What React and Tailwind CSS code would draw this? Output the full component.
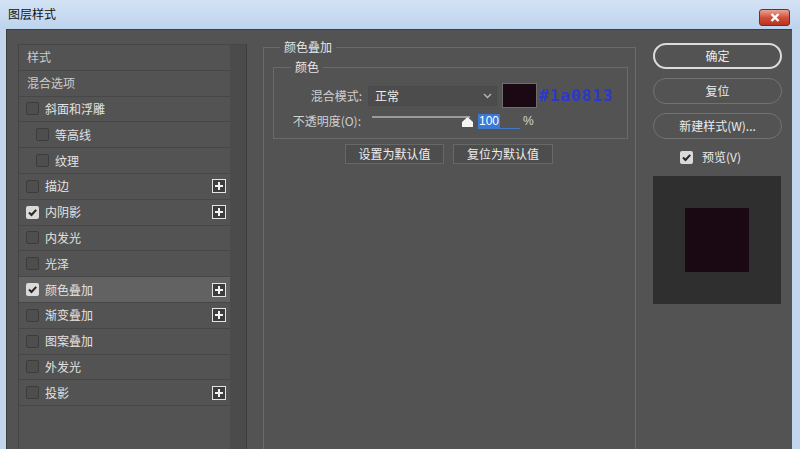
import React from "react";

const rows = [
  { label: "样式", head: true },
  { label: "混合选项", head: true },
  { label: "斜面和浮雕" },
  { label: "等高线", indent: true },
  { label: "纹理", indent: true },
  { label: "描边", plus: true },
  { label: "内阴影", checked: true, plus: true },
  { label: "内发光" },
  { label: "光泽" },
  { label: "颜色叠加", checked: true, plus: true, active: true },
  { label: "渐变叠加", plus: true },
  { label: "图案叠加" },
  { label: "外发光" },
  { label: "投影", plus: true },
];

const Check = ({ checked }) =>
  checked ? (
    <span className="flex h-[13px] w-[13px] shrink-0 items-center justify-center rounded-[2px] bg-[#dadada]">
      <svg width="11" height="11" viewBox="0 0 11 11">
        <path d="M2 5.5l2.5 2.5L9.2 2.8" fill="none" stroke="#262626" strokeWidth="2" />
      </svg>
    </span>
  ) : (
    <span className="h-[13px] w-[13px] shrink-0 rounded-[2px] border border-[#3c3c3c] bg-[#4e4e4e]" />
  );

const PlusBox = () => (
  <span className="ml-auto flex h-[14px] w-[14px] items-center justify-center border border-[#e4e4e4] bg-[#3d3d3d]">
    <svg width="10" height="10" viewBox="0 0 10 10">
      <path d="M5 1v8M1 5h8" stroke="#f2f2f2" strokeWidth="2" />
    </svg>
  </span>
);

const StyleRow = ({ row }) => {
  const base = "flex h-[25.8px] items-center border-b border-[#474747] pr-[4px] text-[12px] leading-[16px]";
  if (row.head) {
    return <div className={`${base} pl-[8px] text-[#cdcdcd]`}>{row.label}</div>;
  }
  return (
    <div className={`${base} ${row.indent ? "pl-[17px]" : "pl-[7px]"} ${row.active ? "bg-[#626262]" : ""} text-[#e2e2e2]`}>
      <Check checked={row.checked} />
      <span className="ml-[6px]">{row.label}</span>
      {row.plus && <PlusBox />}
    </div>
  );
};

const Pill = ({ children, primary }) => (
  <div
    className={`flex h-[26px] items-center justify-center rounded-full text-[12px] leading-[16px] text-[#ececec] ${
      primary ? "border-2 border-[#dcdcdc]" : "border-[1.5px] border-[#727272]"
    }`}
  >
    {children}
  </div>
);

const App = () => {
  return (
    <div className="flex h-[449px] w-[800px] flex-col overflow-hidden bg-[#c2d6ee] font-['Noto_Sans_CJK_SC',sans-serif]">
      {/* title bar */}
      <div className="flex h-[29px] shrink-0 items-start bg-gradient-to-b from-[#d4e3f5] to-[#bdd3ed] pl-[8px] pr-[10px]">
        <span className="mt-[6px] text-[12px] leading-[16px] text-[#111]">图层样式</span>
        <div className="ml-auto mt-[9px] flex h-[17px] w-[31px] items-center justify-center rounded-[3px] border border-[#7a2a20] bg-gradient-to-b from-[#e8a393] via-[#d1503c] to-[#b8321f]">
          <svg width="10" height="9" viewBox="0 0 10 9">
            <path d="M1.5 1l7 7M8.5 1l-7 7" stroke="#fff" strokeWidth="2.4" />
          </svg>
        </div>
      </div>

      {/* dialog body */}
      <div className="ml-[6px] mr-[8px] flex h-[420px] overflow-hidden border-l border-t border-[#3f3f3f] bg-[#535353] pl-[11px]">
        {/* style list */}
        <div className="mt-[14px] flex h-[420px] w-[229px] shrink-0 border-l border-r border-t border-l-[#444] border-r-[#3c3c3c] border-t-[#474747]">
          <div className="flex-1">
            {rows.map((r) => (
              <StyleRow key={r.label} row={r} />
            ))}
          </div>
          <div className="w-[16px] bg-[#4b4b4b]" />
        </div>

        {/* color overlay group */}
        <fieldset className="ml-[16px] mt-[9px] h-[440px] w-[373px] shrink-0 border border-[#6a6a6a]">
          <legend className="ml-[16px] px-[4px] text-[12px] leading-[16px] text-[#e6e6e6]">颜色叠加</legend>

          <fieldset className="ml-[9px] mt-[4px] w-[355px] border border-[#6a6a6a] pb-[9px]">
            <legend className="ml-[17px] px-[4px] text-[12px] leading-[16px] text-[#e6e6e6]">颜色</legend>

            <div className="mt-[8px] flex h-[25px] items-center">
              <span className="w-[88px] text-right text-[12px] leading-[16px] text-[#cfcfcf]">混合模式:</span>
              <div className="ml-[6px] flex h-[20px] w-[129px] items-center border border-[#4a4a4a] bg-[#4c4c4c] pl-[6px] pr-[4px] text-[12px] leading-[16px] text-[#ececec]">
                正常
                <svg className="ml-auto" width="9" height="6" viewBox="0 0 9 6">
                  <path d="M1 1l3.5 3.5L8 1" fill="none" stroke="#b8b8b8" strokeWidth="1.3" />
                </svg>
              </div>
              <div className="ml-[5px] h-[25px] w-[35px] border border-[#6e6e6e] bg-[#1a0813]" />
              <span className="ml-[2px] font-['DejaVu_Sans_Mono',monospace] text-[16px] font-semibold leading-[20px] tracking-[1px] text-[#2a38d0]">
                #1a0813
              </span>
            </div>

            <div className="mt-[5px] flex h-[16px] items-center">
              <span className="w-[87px] text-right text-[12px] leading-[16px] text-[#cfcfcf]">不透明度(O):</span>
              <div className="relative ml-[11px] h-[16px] w-[100px]">
                <div className="absolute left-0 top-[3px] h-[2px] w-[98px] bg-[#9c9c9c]" />
                <svg className="absolute left-[90px] top-[4px]" width="11" height="10" viewBox="0 0 11 10">
                  <path d="M5.5 0L11 5v5H0V5z" fill="#f4f4f4" />
                </svg>
              </div>
              <div className="ml-[6px] flex h-[16px] w-[42px] items-center border-b border-[#3f78c8]">
                <span className="bg-[#3a7ad6] px-[1px] font-['Liberation_Sans',sans-serif] text-[12px] leading-[14px] text-white">100</span>
              </div>
              <span className="ml-[3px] font-['Liberation_Sans',sans-serif] text-[12px] text-[#d8d8d8]">%</span>
            </div>
          </fieldset>

          <div className="ml-[81px] mt-[5px] flex gap-[9px]">
            <div className="flex h-[20px] w-[99px] items-center justify-center border border-[#686868] bg-[#4d4d4d] text-[12px] leading-[16px] text-[#ececec]">
              设置为默认值
            </div>
            <div className="flex h-[20px] w-[100px] items-center justify-center border border-[#686868] bg-[#4d4d4d] text-[12px] leading-[16px] text-[#ececec]">
              复位为默认值
            </div>
          </div>
        </fieldset>

        {/* right column */}
        <div className="ml-[17px] mt-[13px] flex w-[129px] shrink-0 flex-col">
          <div className="h-[27px]">
            <Pill primary>确定</Pill>
          </div>
          <div className="mt-[8px]">
            <Pill>复位</Pill>
          </div>
          <div className="mt-[9px]">
            <Pill>新建样式(W)...</Pill>
          </div>
          <div className="mt-[10px] flex h-[16px] items-center pl-[27px]">
            <Check checked />
            <span className="ml-[9px] text-[12px] leading-[16px] text-[#ececec]">预览(V)</span>
          </div>
          <div className="mt-[11px] flex h-[128px] w-[128px] items-center justify-center bg-[#2f2f2f]">
            <div className="h-[64px] w-[64px] bg-[#1a0813]" />
          </div>
        </div>
      </div>
    </div>
  );
};

export default App;
